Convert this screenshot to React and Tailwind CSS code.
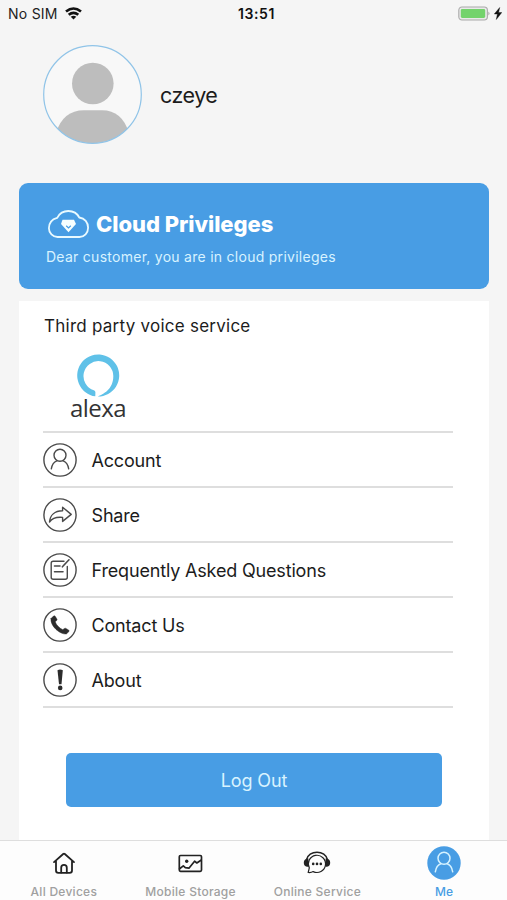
const UserGlyph = () => (
  <>
    <circle cx="17" cy="12.3" r="6" />
    <path d="M8.3 25.8C9 21.7 11 18.8 13.8 17.8M20.2 17.8C23 18.8 25 21.7 25.7 25.8" />
  </>
);

const RowIcon = ({ children }) => (
  <svg className="h-[34px] w-[34px] shrink-0" viewBox="0 0 34 34" fill="none" stroke="#4a4a4a" strokeWidth="1.4" strokeLinecap="round" strokeLinejoin="round">
    <circle cx="17" cy="17" r="16.1" />
    {children}
  </svg>
);

const rows = [
  { label: "Account", icon: <UserGlyph /> },
  {
    label: "Share",
    icon: <path d="M6.5 24C7 17.5 11.5 12.8 19.6 12.8V9.2L28.2 16.4L19.6 23.4V19.4C13.6 18.8 9 20.5 6.5 24Z" />,
  },
  {
    label: "Frequently Asked Questions",
    icon: (
      <>
        <path d="M21 8.2H10.2Q8.2 8.2 8.2 10.2V24.3Q8.2 26.3 10.2 26.3H22.3Q24.3 26.3 24.3 24.3V13.5" />
        <path d="M11.5 13H17M11.5 18.7H20M19.4 13.8L26 6.8" strokeWidth="1.6" />
      </>
    ),
  },
  {
    label: "Contact Us",
    icon: (
      <path d="M8 10.6L10.6 8Q11.6 7.5 12.2 8.3L14 11.2Q14.3 12 13.6 12.6L12.2 13.8C13.3 17 16.3 20.2 19.8 21.7L21.4 20.5Q22.2 20 22.9 20.4L25.8 22.2Q26.4 22.8 25.9 23.6L23.4 25.9C17.4 27 6.8 18 8 10.6Z" fill="#2c2c2c" stroke="#2c2c2c" strokeWidth="0.5" />
    ),
  },
  {
    label: "About",
    icon: (
      <>
        <path d="M14.5 7.2Q17 5.9 19.8 7.2L18.5 21.2H16Z" fill="#2c2c2c" stroke="none" />
        <circle cx="17.2" cy="24.9" r="2.3" fill="#2c2c2c" stroke="none" />
      </>
    ),
  },
];

const tabs = [
  {
    label: "All Devices",
    icon: (
      <g strokeWidth="1.8">
        <path d="M7 16.1L16.2 8Q17 7.3 17.8 8L27 16.1M9 15V24.5Q9 26.8 11.3 26.8H22.7Q25 26.8 25 24.5V15" />
        <path d="M14.2 26.5V21.7A2.8 2.8 0 0 1 19.8 21.7V26.5" />
      </g>
    ),
  },
  {
    label: "Mobile Storage",
    icon: (
      <g strokeWidth="1.7">
        <rect x="5.3" y="9.5" width="22.2" height="15.8" rx="1.2" />
        <path d="M5.6 22.7L9.3 19.9L11.3 21.7L14.9 22.2L20.6 15.2L22.8 17L27 14.2" />
        <circle cx="12.7" cy="15.2" r="1.7" fill="#222" stroke="none" />
      </g>
    ),
  },
  {
    label: "Online Service",
    icon: (
      <g strokeWidth="1.2">
        <path d="M6.4 14C8.3 3.5 25.7 3.5 27.6 14" strokeWidth="1.5" />
        <path d="M8.4 12.5H7Q3.8 13.5 3.8 16.7Q3.8 20.1 7 20.8H8.4ZM25.6 12.5H27Q30.2 13.5 30.2 16.7Q30.2 20.1 27 20.8H25.6Z" fill="#222" stroke="none" />
        <path d="M8.2 26.5L9.3 21.8A8.6 8.6 0 1 1 13.2 25.6Q11 26.9 8.2 26.5Z" />
        <g fill="#222" stroke="none">
          <circle cx="13.2" cy="17.9" r="1.3" />
          <circle cx="17" cy="17.9" r="1.3" />
          <circle cx="20.8" cy="17.9" r="1.3" />
        </g>
      </g>
    ),
  },
  {
    label: "Me",
    active: true,
    icon: (
      <>
        <circle cx="17" cy="17" r="16.7" fill="#489de4" stroke="none" />
        <g stroke="#d5f2ff" strokeWidth="1.5">
          <UserGlyph />
        </g>
      </>
    ),
  },
];

function StatusBar() {
  return (
    <header className="grid h-7 grid-cols-3 items-center pl-2 pr-[5px] text-[14px] leading-none text-[#222]">
      <div className="flex items-center gap-[7px]">
        <span className="tracking-[0.25px]">No SIM</span>
        <svg className="mb-[2px] h-[13px] w-[17px]" viewBox="0 0 17 13" fill="none" stroke="#111" strokeWidth="2.6">
          <path d="M1 4.6Q8.5 -1.6 16 4.6M3.7 7.8Q8.5 3.8 13.3 7.8" />
          <path d="M5.7 9.7Q8.5 7.6 11.3 9.7L8.5 12.5Z" fill="#111" stroke="none" />
        </svg>
      </div>
      <span className="pl-[3px] text-center font-semibold tracking-[0.6px] text-[#111]">13:51</span>
      <div className="flex items-center justify-end gap-1 pb-[2px]">
        <svg className="h-[15px] w-8" viewBox="0 0 32 15">
          <rect x="0.8" y="1" width="28.6" height="13" rx="3.2" fill="#e9e9e9" stroke="#aaa" strokeWidth="1.1" />
          <rect x="2.8" y="3" width="24.4" height="9" rx="1.4" fill="#73d36c" />
          <path d="M30.4 5.5Q32.6 7.5 30.4 9.5Z" fill="#aaa" />
        </svg>
        <svg className="h-[13px] w-2" viewBox="0 0 8 13">
          <path d="M5.7 0.5L0.3 7H3.4L2.3 12.5L7.8 5.5H4.6Z" fill="#111" stroke="#111" strokeWidth="0.4" />
        </svg>
      </div>
    </header>
  );
}

export default function App() {
  return (
    <div className="flex h-[900px] w-[507px] flex-col overflow-hidden bg-[#f5f5f5] font-['Inter','Liberation_Sans',sans-serif] text-[#1c1c1c]">
      <StatusBar />

      <section className="flex h-[155px] shrink-0 items-start gap-[18px] pl-[43px] pt-[17px]">
        <svg className="h-[99px] w-[99px]" viewBox="0 0 99 99">
          <clipPath id="avatar"><circle cx="49.5" cy="49.5" r="48.8" /></clipPath>
          <circle cx="49.5" cy="49.5" r="48.8" fill="#f8f8f8" />
          <g fill="#bdbdbd" clipPath="url(#avatar)">
            <circle cx="49.8" cy="38.5" r="20.8" />
            <path d="M13 99V88Q20 65.3 41 65.3H59Q79 65.3 86 88V99Z" />
          </g>
          <circle cx="49.5" cy="49.5" r="48.8" fill="none" stroke="#90c4e8" strokeWidth="1.2" />
        </svg>
        <h1 className="pt-[36px] text-[21.5px] leading-7 tracking-[-0.5px]">czeye</h1>
      </section>

      <section className="mx-[19px] mr-[18px] h-[106px] shrink-0 rounded-[9px] bg-[#489de4] pl-[27px] pt-[26px] text-white">
        <div className="flex h-[30px] items-center gap-[7px] pl-[2px]">
          <svg className="h-[28px] w-[41px]" viewBox="0 0 41 28" fill="none" stroke="#e9faff" strokeWidth="1.8">
            <path d="M9.5 27C4.8 27 0.9 23 0.9 18.3C0.9 13.2 4 9.2 9.2 7.8C11.5 3.5 15.2 1 20.3 1C25.2 1 29.2 3.3 31.3 7.5C36.7 8.3 40.1 12.5 40.1 17.7C40.1 23 36.3 27 31.5 27Z" />
            <path d="M14.5 9.8H26L28 14L20.5 22.2L13 14Z" fill="#f6ffff" stroke="none" />
            <path d="M18.2 15.8L20.5 18L22.8 15.8" stroke="#489de4" strokeWidth="1.2" />
          </svg>
          <h2 className="text-[22px] font-extrabold leading-7 tracking-[-0.05px]">Cloud Privileges</h2>
        </div>
        <p className="pt-[8px] text-[14px] leading-5 tracking-[0.27px] text-[#d8f3ff]">Dear customer, you are in cloud privileges</p>
      </section>

      <main className="mx-[19px] mr-[18px] mt-[12px] flex h-[539px] shrink-0 flex-col bg-white pl-6 pr-9">
        <h3 className="pl-px pt-[13px] text-[17px] leading-6 tracking-[0.25px]">Third party voice service</h3>
        <div className="flex h-[93px] w-[110px] shrink-0 flex-col items-center pt-[16px]">
          <svg className="h-[43px] w-[43px] shrink-0" viewBox="0 0 43 43">
            <path fillRule="evenodd" d="M18.3 42.3A21 21 0 1 1 20.8 42.5C26 40.4 36.3 35.5 36.3 22.3A14.9 14.9 0 1 0 16.8 36.2Q18.5 36.8 18.4 38.5Z" fill="#5fc1e8" />
          </svg>
          <span className="font-['Open_Sans'] text-[24px] font-normal leading-[22px] tracking-[-0.6px] text-[#333]">alexa</span>
        </div>
        <ul className="w-[410px] border-t-2 border-[#dedede]">
          {rows.map((row) => (
            <li key={row.label} className="flex h-[55px] items-center gap-[14px] border-b-2 border-[#dedede] text-[18px] leading-6">
              <RowIcon>{row.icon}</RowIcon>
              <span className="pl-[0.5px] pt-[3px] tracking-[-0.17px]">{row.label}</span>
            </li>
          ))}
        </ul>
        <button className="ml-[23px] mt-[45px] h-[54px] w-[376px] shrink-0 rounded-[5px] bg-[#489de4] text-[18px] tracking-[-0.15px] text-[#d8f3ff]">Log Out</button>
      </main>

      <nav className="grid h-[60px] shrink-0 grid-cols-4 border-t border-[#dedede] bg-[#fdfdfd]">
        {tabs.map((tab) => (
          <div key={tab.label} className="flex flex-col items-center pl-px pt-[5px]">
            <svg className="h-[34px] w-[34px]" viewBox="0 0 34 34" fill="none" stroke="#222" strokeLinecap="round" strokeLinejoin="round">
              {tab.icon}
            </svg>
            <span className={tab.active ? "mt-[4px] text-[12px] font-medium leading-4 tracking-[0.2px] text-[#489de4]" : "mt-[4px] text-[12px] font-medium leading-4 tracking-[0.27px] text-[#a0a0a0]"}>{tab.label}</span>
          </div>
        ))}
      </nav>
    </div>
  );
}
